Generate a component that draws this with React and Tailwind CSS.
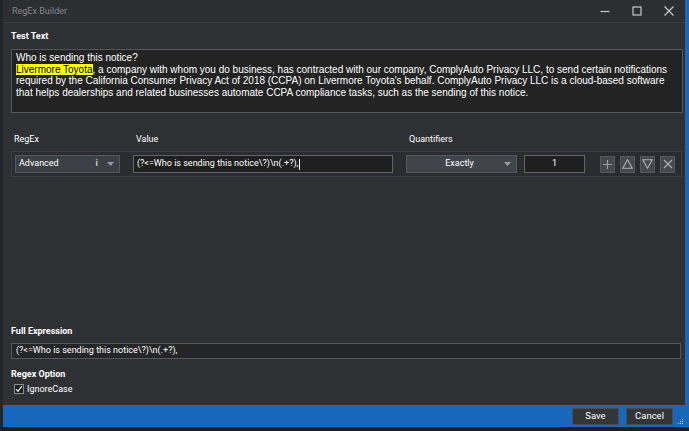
import React from "react";

const ui = { fontFamily: 'Roboto, "Noto Sans", sans-serif' };
const arial = { fontFamily: '"Liberation Sans", Arial, sans-serif' };

function Caret() {
  return (
    <svg width="7" height="4" viewBox="0 0 7 4"><path d="M0 0h7L3.5 4z" fill="#9a9ca0" /></svg>
  );
}

function IconBtn({ children }) {
  return (
    <div className="w-[15px] h-[17px] bg-[#45484e] border border-[#55585e] flex items-center justify-center">
      {children}
    </div>
  );
}

export default function App() {
  return (
    <div className="w-[689px] h-[431px] flex flex-col bg-[#1d1f22] overflow-hidden" style={ui}>
      <div className="flex flex-1 min-h-0">
        <div className="w-[3px] bg-[#22262c]" />
        <div className="flex-1 flex flex-col bg-[#2e3034] min-w-0">
          {/* title bar */}
          <div className="h-[23px] flex items-center bg-[#2c2e32] border-b border-[#3a3c40] pl-[9px] pr-[11px]">
            <span className="text-[9px] text-[#85878b] leading-none">RegEx Builder</span>
            <div className="ml-auto flex items-center gap-[22px]">
              <svg width="10" height="10" viewBox="0 0 10 10"><path d="M0.5 5.5h9" stroke="#c8c8c8" strokeWidth="1.2" /></svg>
              <svg width="10" height="10" viewBox="0 0 10 10"><rect x="1" y="1" width="8" height="8" fill="none" stroke="#c8c8c8" strokeWidth="1.2" /></svg>
              <svg width="10" height="10" viewBox="0 0 10 10"><path d="M0.5 0.5l9 9M9.5 0.5l-9 9" stroke="#c8c8c8" strokeWidth="1.2" /></svg>
            </div>
          </div>
          {/* body */}
          <div className="flex-1 flex flex-col pl-[8px] pr-[2px] min-h-0">
            <div className="mt-[7px] h-[12px] flex items-center text-[9px] font-bold text-white leading-none">Test Text</div>
            <div className="mt-[7px] h-[64px] bg-[#232324] border border-[#55575b] px-[4px] pt-[2px] text-[10px] leading-[11.7px] text-white whitespace-nowrap overflow-hidden" style={arial}>
              <div>Who is sending this notice?</div>
              <div>
                <span className="bg-[#ffff00] text-black">Livermore Toyota</span>, a company with whom you do business, has contracted with our company, ComplyAuto Privacy LLC, to send certain notifications
              </div>
              <div>required by the California Consumer Privacy Act of 2018 (CCPA) on Livermore Toyota's behalf. ComplyAuto Privacy LLC is a cloud-based software</div>
              <div>that helps dealerships and related businesses automate CCPA compliance tasks, such as the sending of this notice.</div>
            </div>
            {/* labels */}
            <div className="mt-[20px] h-[12px] flex items-center text-[9px] text-white leading-none">
              <span className="ml-[3px] w-[122px]">RegEx</span>
              <span className="w-[273px]">Value</span>
              <span>Quantifiers</span>
            </div>
            <div className="mt-[6px] h-[26px] bg-[#2a2c30] border border-[#3c3e42] flex items-center pl-[3px] mr-[1px]">
              <div className="w-[105px] h-[18px] bg-[#3c3f45] border border-[#55585e] flex items-center pl-[3px] pr-[5px] text-[9px] text-white">
                <span>Advanced</span>
                <span className="ml-auto mr-[9px] text-[9px] font-bold text-[#c8c8c8]">i</span>
                <Caret />
              </div>
              <div className="ml-[13px] w-[260px] h-[18px] bg-[#1f1f20] border border-[#62646a] flex items-center pl-[3px] text-[9px] text-white">
                <span>(?&lt;=Who is sending this notice\?)\n(.+?),</span>
                <span className="w-[1px] h-[11px] bg-white ml-[1px]" />
              </div>
              <div className="ml-[13px] w-[111px] h-[18px] bg-[#41444b] border border-[#55585e] flex items-center pr-[5px] text-[9px] text-white">
                <span className="flex-1 text-center pl-[8px]">Exactly</span>
                <Caret />
              </div>
              <div className="ml-[7px] w-[61px] h-[18px] bg-[#1f1f20] border border-[#62646a] flex items-center justify-center text-[9px] text-white">1</div>
              <div className="ml-[15px] flex gap-[5px]">
                <IconBtn>
                  <svg width="9" height="9" viewBox="0 0 9 9"><path d="M4.5 0v9M0 4.5h9" stroke="#9ea0a4" strokeWidth="1.2" /></svg>
                </IconBtn>
                <IconBtn>
                  <svg width="11" height="10" viewBox="0 0 11 10"><path d="M5.5 0.8L10.2 9.2H0.8z" fill="none" stroke="#b0b2b6" strokeWidth="1.1" /></svg>
                </IconBtn>
                <IconBtn>
                  <svg width="11" height="10" viewBox="0 0 11 10"><path d="M5.5 9.2L10.2 0.8H0.8z" fill="none" stroke="#b0b2b6" strokeWidth="1.1" /></svg>
                </IconBtn>
                <IconBtn>
                  <svg width="10" height="10" viewBox="0 0 10 10"><path d="M1 1l8 8M9 1l-8 8" stroke="#b0b2b6" strokeWidth="1.1" /></svg>
                </IconBtn>
              </div>
            </div>
            <div className="flex-1" />
            <div className="h-[12px] flex items-center text-[9px] font-bold text-white leading-none">Full Expression</div>
            <div className="mt-[6px] h-[16px] bg-[#242526] border border-[#55575b] flex items-center pl-[4px] text-[9px] text-white mr-[2px]">
              (?&lt;=Who is sending this notice\?)\n(.+?),
            </div>
            <div className="mt-[9px] h-[12px] flex items-center text-[9px] font-bold text-white leading-none">Regex Option</div>
            <div className="mt-[3px] h-[12px] flex items-center text-[9px] text-white leading-none mb-[10px]">
              <div className="ml-[3px] w-[10px] h-[10px] bg-[#1e1f20] border border-[#8a8c90] flex items-center justify-center">
                <svg width="8" height="8" viewBox="0 0 8 8"><path d="M1 4.2l2 2.2L7 1" fill="none" stroke="#ffffff" strokeWidth="1.2" /></svg>
              </div>
              <span className="ml-[3px]">IgnoreCase</span>
            </div>
          </div>
          {/* footer */}
          <div className="h-[22px] bg-[#1768bd] flex items-center justify-end pr-[12px] relative">
            <div className="w-[47px] h-[17px] bg-[#333539] border border-[#4a4c50] flex items-center justify-center text-[9.5px] text-white">Save</div>
            <div className="ml-[7px] w-[47px] h-[17px] bg-[#333539] border border-[#4a4c50] flex items-center justify-center text-[9.5px] text-white">Cancel</div>
            <svg className="absolute right-[1px] bottom-[2px]" width="6" height="6" viewBox="0 0 6 6">
              <rect x="4" y="0" width="1" height="1" fill="#cfe0f5" />
              <rect x="2" y="2" width="1" height="1" fill="#cfe0f5" />
              <rect x="4" y="2" width="1" height="1" fill="#cfe0f5" />
              <rect x="0" y="4" width="1" height="1" fill="#cfe0f5" />
              <rect x="2" y="4" width="1" height="1" fill="#cfe0f5" />
              <rect x="4" y="4" width="1" height="1" fill="#cfe0f5" />
            </svg>
          </div>
        </div>
        <div className="w-[4px] bg-[#1769b8]" />
      </div>
      <div className="h-[4px] bg-[#1d1f22]" />
    </div>
  );
}
